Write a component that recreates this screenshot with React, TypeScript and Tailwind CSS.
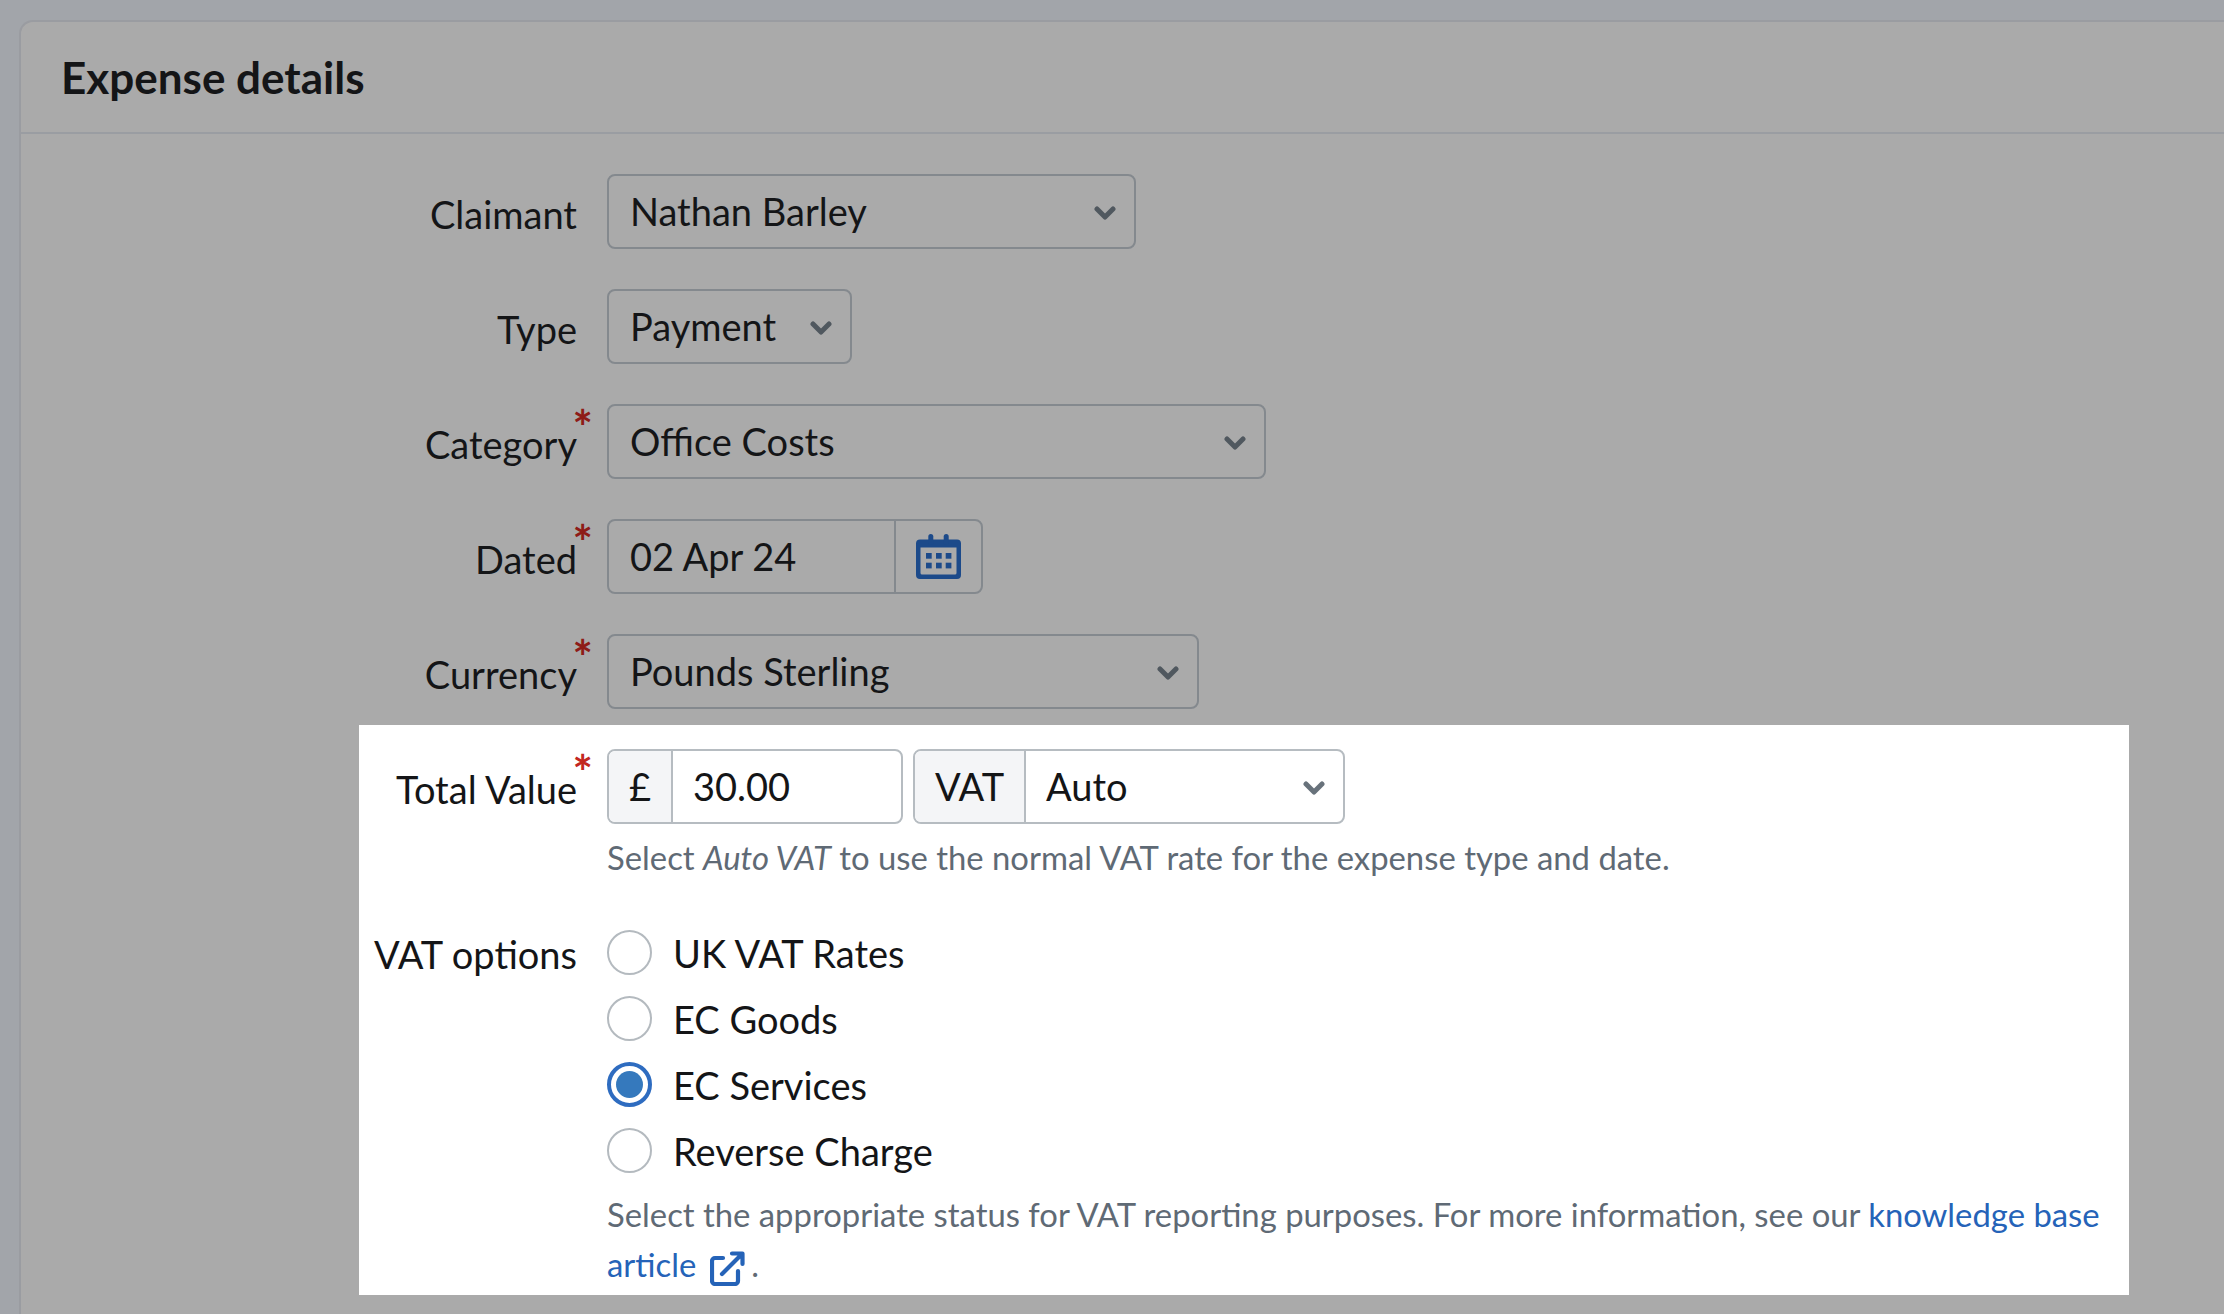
function Chevron({ className }: { className: string }) {
  return (
    <svg viewBox="0 0 22 14" className={className} fill="none" stroke="currentColor" strokeWidth="5" strokeLinecap="round" strokeLinejoin="round">
      <path d="M3 3l8 8 8-8" />
    </svg>
  );
}

function CalendarIcon() {
  return (
    <svg viewBox="0 0 45 45" className="h-[45px] w-[45px] text-[#1c4a8a]" fill="currentColor">
      <path
        fillRule="evenodd"
        d="M4 5.5h37a4 4 0 0 1 4 4V41a4 4 0 0 1-4 4H4a4 4 0 0 1-4-4V9.5a4 4 0 0 1 4-4zM4.5 13.500V39a1.500 1.500 0 0 0 1.500 1.500h33a1.500 1.500 0 0 0 1.500-1.500V13.500z"
      />
      <rect x="12.300" width="5" height="11" rx="2.500" />
      <rect x="27.700" width="5" height="11" rx="2.500" />
      <rect x="10" y="19" width="5.700" height="5.700" />
      <rect x="20" y="19" width="5.700" height="5.700" />
      <rect x="29.700" y="19" width="5.700" height="5.700" />
      <rect x="10" y="28.700" width="5.700" height="5.700" />
      <rect x="20" y="28.700" width="5.700" height="5.700" />
      <rect x="29.700" y="28.700" width="5.700" height="5.700" />
    </svg>
  );
}

function ExternalIcon() {
  return (
    <svg viewBox="0 0 35 35" className="ml-[14px] mr-[6px] inline-block h-[35px] w-[35px] align-[-9px]" fill="none" stroke="currentColor" strokeWidth="4.200" strokeLinecap="round" strokeLinejoin="round">
      <path d="M13 7H5a3 3 0 0 0-3 3v20a3 3 0 0 0 3 3h20a3 3 0 0 0 3-3V20" />
      <path d="M12 23L32 3M22 2.500h10.500V13" />
    </svg>
  );
}

function Label({ text, required, className, star = "text-[#8e1b17]" }: { text: string; required?: boolean; className: string; star?: string }) {
  return (
    <div className={`relative h-[75px] shrink-0 pt-[3px] text-right text-[38px] leading-[74px] ${className}`}>
      {text}
      {required ? (
        <span className={`absolute right-[-16px] top-[3px] text-[48px] font-bold leading-[40px] ${star}`}>*</span>
      ) : null}
    </div>
  );
}

function Select({ value, width }: { value: string; width: string }) {
  return (
    <div className={`flex h-[75px] items-center justify-between rounded-[8px] border-2 border-[#84898e] pl-[21px] pr-[18px] text-[38px] ${width}`}>
      <span>{value}</span>
      <Chevron className="mt-[2px] h-[14px] w-[22px] text-[#50585f]" />
    </div>
  );
}

function Radio({ label, checked }: { label: string; checked?: boolean }) {
  return (
    <div className="flex h-[45px] items-center gap-[21px]">
      {checked ? (
        <span className="flex h-[45px] w-[45px] items-center justify-center rounded-full border-[4px] border-[#2e6cc0] bg-white">
          <span className="h-[27px] w-[27px] rounded-full bg-[#3579bd]" />
        </span>
      ) : (
        <span className="h-[45px] w-[45px] rounded-full border-2 border-[#b4babf] bg-white" />
      )}
      <span className="pt-[2px] text-[38px]">{label}</span>
    </div>
  );
}

export default function App() {
  return (
    <div className="h-[1314px] overflow-hidden bg-[#a2a5aa] pl-[19px] pt-[20px] font-['Lato',sans-serif] text-[#141517]">
      <div className="h-[1400px] rounded-tl-[14px] border-l-2 border-t-2 border-[#9a9ca1] bg-[#aaaaaa]">
        <div className="flex h-[112px] items-center border-b-2 border-[#9a9da2] pl-[40px] text-[44px] font-bold">
          Expense details
        </div>

        <div className="flex flex-col gap-[40px] pt-[40px]">
          <div className="flex gap-[30px]">
            <Label text="Claimant" className="w-[556px]" />
            <Select value="Nathan Barley" width="w-[529px]" />
          </div>
          <div className="flex gap-[30px]">
            <Label text="Type" className="w-[556px]" />
            <Select value="Payment" width="w-[245px]" />
          </div>
          <div className="flex gap-[30px]">
            <Label text="Category" required className="w-[556px]" />
            <Select value="Office Costs" width="w-[659px]" />
          </div>
          <div className="flex gap-[30px]">
            <Label text="Dated" required className="w-[556px]" />
            <div className="flex h-[75px] w-[376px] items-center rounded-[8px] border-2 border-[#84898e] text-[38px]">
              <span className="w-[285px] pl-[21px]">02 Apr 24</span>
              <span className="flex h-full flex-1 items-center justify-center border-l-2 border-[#84898e]">
                <CalendarIcon />
              </span>
            </div>
          </div>
          <div className="flex gap-[30px]">
            <Label text="Currency" required className="w-[556px]" />
            <Select value="Pounds Sterling" width="w-[592px]" />
          </div>
        </div>

        <div className="ml-[338px] mt-[16px] h-[570px] w-[1770px] bg-white pt-[24px]">
          <div className="flex gap-[30px]">
            <Label text="Total Value" required star="text-[#c2271f]" className="w-[218px]" />
            <div>
              <div className="flex gap-[10px]">
                <div className="flex h-[75px] w-[296px] overflow-hidden rounded-[8px] border-2 border-[#b6bcc1] text-[38px]">
                  <span className="flex w-[64px] items-center justify-center border-r-2 border-[#b6bcc1] bg-[#f4f5f7]">£</span>
                  <span className="flex items-center pl-[20px]">30.00</span>
                </div>
                <div className="flex h-[75px] w-[432px] overflow-hidden rounded-[8px] border-2 border-[#b6bcc1] text-[38px]">
                  <span className="flex w-[111px] items-center justify-center border-r-2 border-[#b6bcc1] bg-[#f4f5f7]">VAT</span>
                  <span className="flex flex-1 items-center justify-between pl-[20px] pr-[18px]">
                    Auto
                    <Chevron className="mt-[2px] h-[14px] w-[22px] text-[#68727b]" />
                  </span>
                </div>
              </div>
              <p className="mt-[14px] text-[32.850px] leading-[40px] text-[#5f6a75]">
                Select <em>Auto VAT</em> to use the normal VAT rate for the expense type and date.
              </p>
            </div>
          </div>

          <div className="mt-[52px] flex gap-[30px]">
            <Label text="VAT options" className="mt-[-16px] w-[218px]" />
            <div>
              <div className="flex flex-col gap-[21px]">
                <Radio label="UK VAT Rates" />
                <Radio label="EC Goods" />
                <Radio label="EC Services" checked />
                <Radio label="Reverse Charge" />
              </div>
              <p className="mt-[17px] w-[1510px] text-[32.850px] leading-[50px] text-[#5f6a75]">
                Select the appropriate status for VAT reporting purposes. For more information, see our{" "}
                <a className="text-[#2563b8]">
                  knowledge base article
                  <ExternalIcon />
                </a>
                .
              </p>
            </div>
          </div>
        </div>
      </div>
    </div>
  );
}
